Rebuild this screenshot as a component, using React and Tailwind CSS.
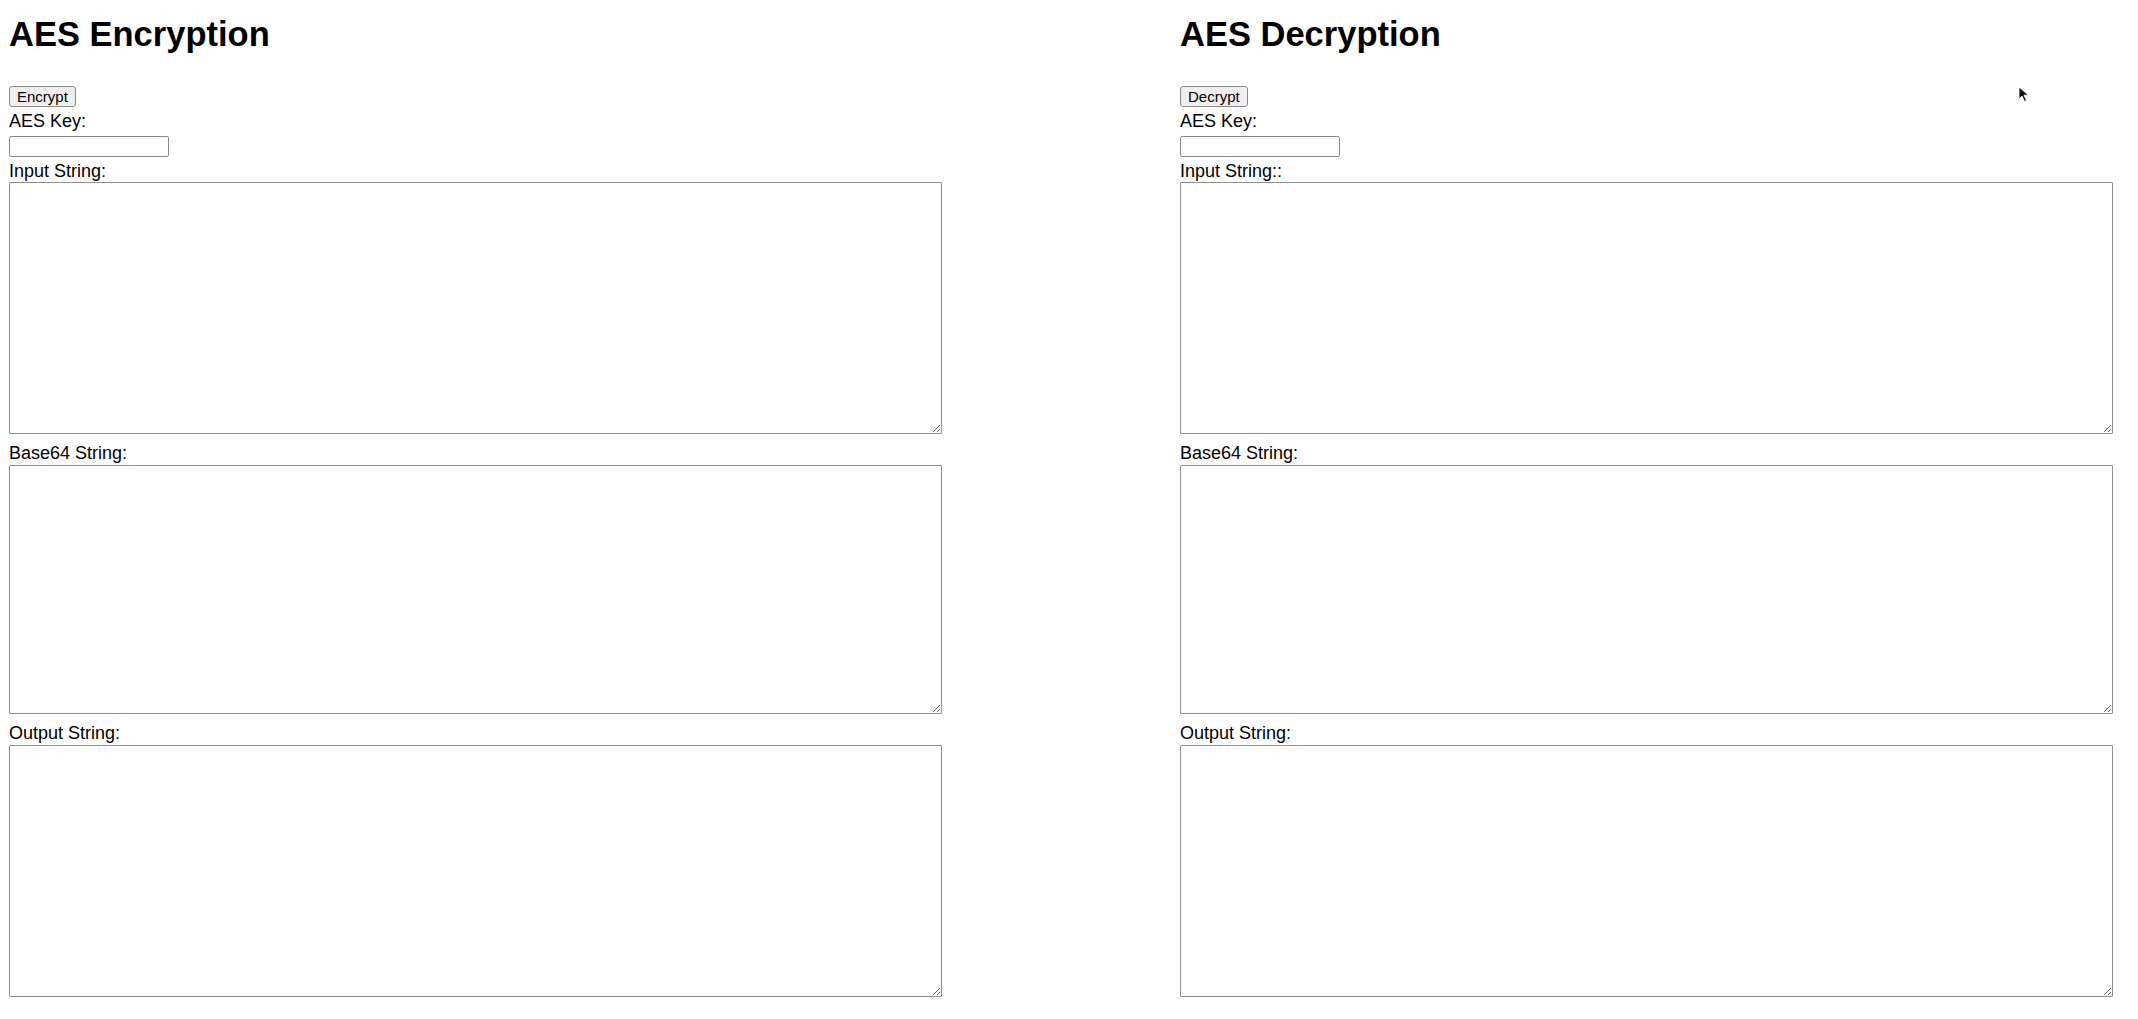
export default function App() {
  return (
    <div className="relative min-h-screen bg-white text-black font-['Liberation_Sans',Arial,sans-serif]">
      <div className="flex gap-[238px] pl-[9px]">
        <CryptoPanel title="AES Encryption" action="Encrypt" inputLabel="Input String:" />
        <CryptoPanel title="AES Decryption" action="Decrypt" inputLabel="Input String::" />
      </div>

      {/* mouse pointer left in the screenshot */}
      <svg
        className="absolute left-[2018px] top-[86px]"
        width="12"
        height="17"
        viewBox="0 0 12 17"
      >
        <path d="M1 1 L1 13 L4 10 L6.5 15.5 L8.5 14.6 L6 9.2 L10.5 9.2 Z" fill="#111" stroke="#fff" strokeWidth="0.8" />
      </svg>
    </div>
  )
}

function CryptoPanel({ title, action, inputLabel }) {
  return (
    <div className="flex w-[933px] flex-col items-start">
      <h1 className="mt-[14px] text-[34.5px] font-bold leading-[40px]">{title}</h1>

      <button
        type="button"
        className="mt-[32px] h-[21px] rounded-[3px] border border-[#8a8a8a] bg-[#efefef] px-[7px] text-[15px] leading-[19px] text-black"
      >
        {action}
      </button>

      <label className="mt-[4px] text-[18px] leading-[21px]">AES Key:</label>
      <input
        type="text"
        className="mt-[4px] h-[21px] w-[160px] rounded-[2px] border border-[#8a8a8a] bg-white px-1 text-[14px]"
      />

      <label className="mt-[4px] text-[18px] leading-[21px]">{inputLabel}</label>
      <textarea className="h-[252px] w-full resize rounded-[1px] border border-[#8f8f8f] bg-white" />

      <label className="mt-[9px] text-[18px] leading-[21px]">Base64 String:</label>
      <textarea className="mt-[1px] h-[249px] w-full resize rounded-[1px] border border-[#8f8f8f] bg-white" />

      <label className="mt-[9px] text-[18px] leading-[21px]">Output String:</label>
      <textarea className="mt-[1px] h-[252px] w-full resize rounded-[1px] border border-[#8f8f8f] bg-white" />
    </div>
  )
}
